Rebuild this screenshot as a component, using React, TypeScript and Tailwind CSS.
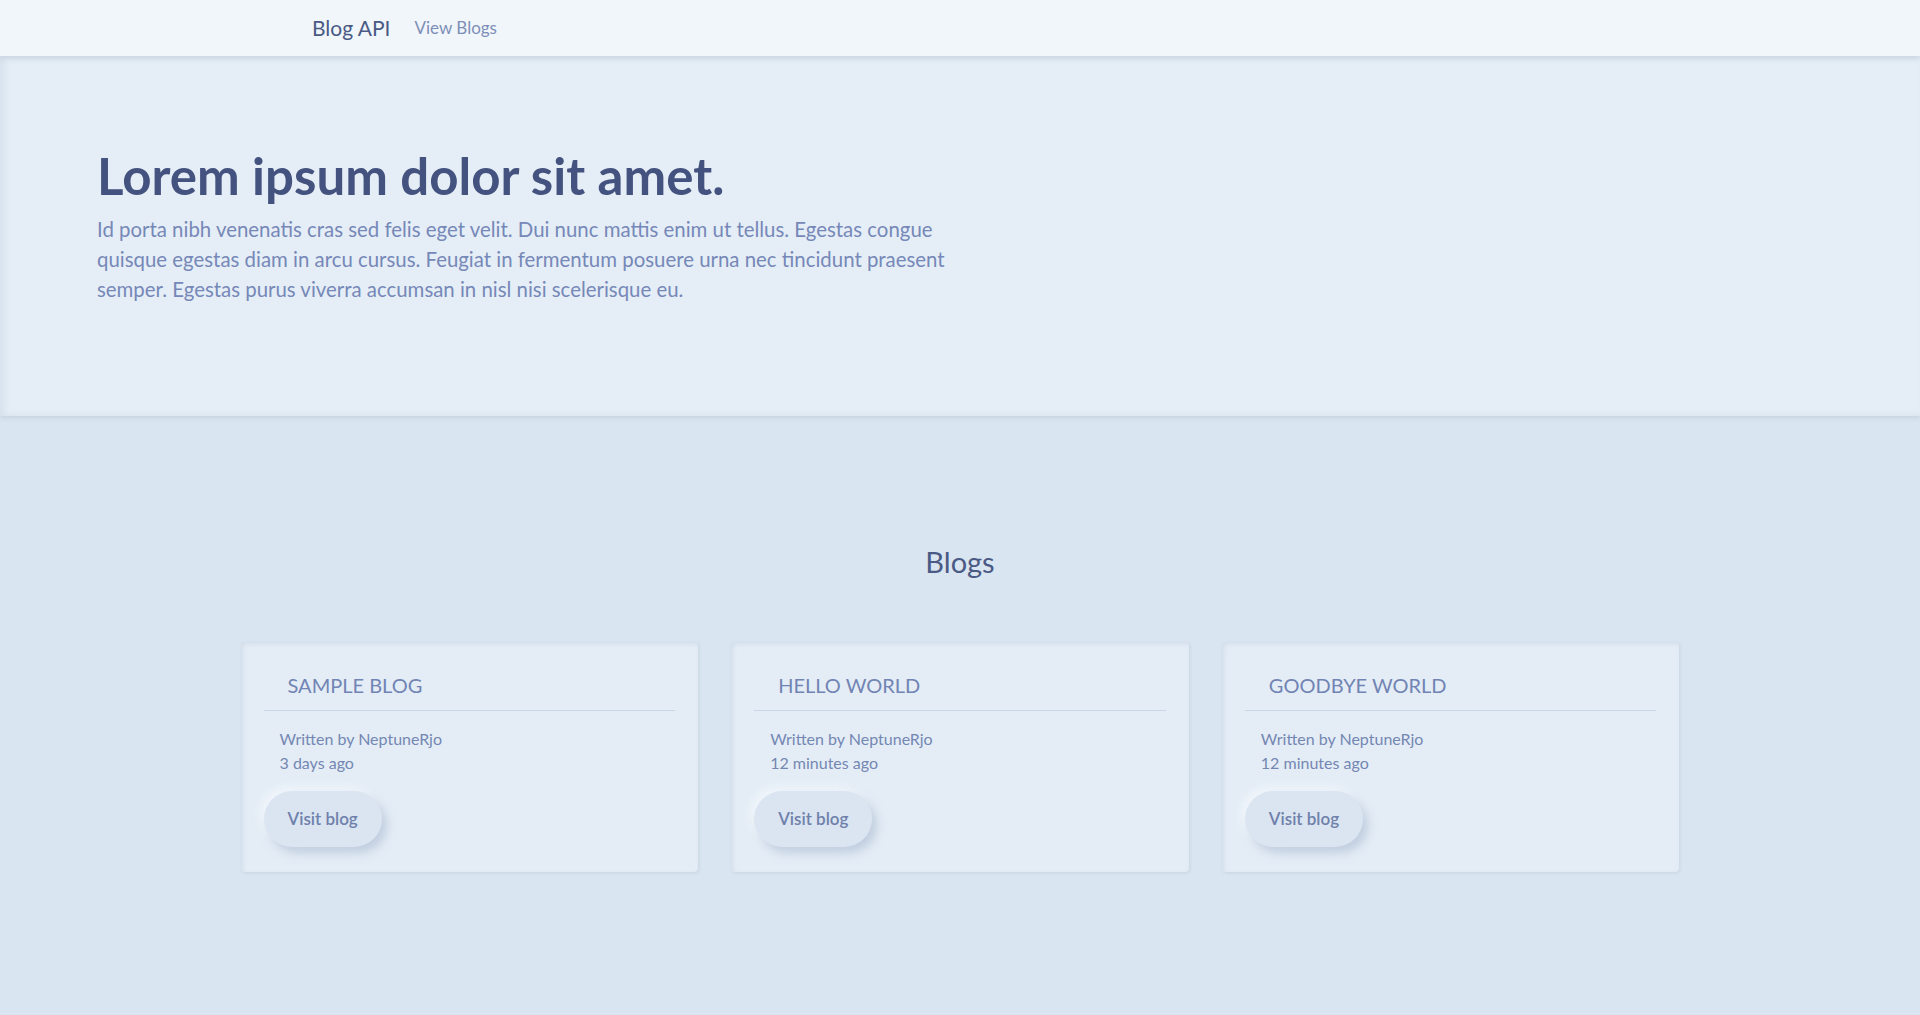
import React from "react"

interface Blog {
	title: string
	author: string
	time: string
}

const blogs: Blog[] = [
	{ title: "SAMPLE BLOG", author: "NeptuneRjo", time: "3 days ago" },
	{ title: "HELLO WORLD", author: "NeptuneRjo", time: "12 minutes ago" },
	{ title: "GOODBYE WORLD", author: "NeptuneRjo", time: "12 minutes ago" },
]

function BlogCard({ blog }: { blog: Blog }) {
	return (
		<div className="flex flex-col bg-[#e4edf6] rounded-sm px-[23px] pt-[28px] pb-[25px] shadow-[inset_2px_2px_4px_rgba(180,195,215,0.35),1px_1px_3px_rgba(170,185,205,0.35)]">
			<h3 className="text-[20px] text-[#7184b3] pl-6 pb-[10px] border-b border-[#c8d6e6] leading-[30px]">{blog.title}</h3>
			<div className="flex flex-col pl-4 pt-[16px] text-[16px] text-[#7487b3] leading-6">
				<p>Written by {blog.author}</p>
				<p>{blog.time}</p>
			</div>
			<div className="mt-[16px]">
				<button
					type="button"
					className="bg-[#dae5f1] rounded-full h-[56px] px-6 text-[17px] font-semibold text-[#6f80ab] shadow-[5px_6px_10px_rgba(165,180,205,0.55),-4px_-4px_8px_rgba(245,249,253,0.8)]"
				>
					Visit blog
				</button>
			</div>
		</div>
	)
}

export default function App() {
	return (
		<div className="min-h-[1015px] bg-[#d9e5f0] font-['Lato','Noto_Sans',sans-serif]">
			{/*navbar*/}
			<nav className="relative z-10 h-[56px] bg-[#f1f6fa] flex items-center pl-[312px] gap-6 shadow-[0_2px_6px_rgba(170,185,205,0.45)]">
				<span className="text-[21px] text-[#4a5a85]">Blog API</span>
				<span className="text-[17px] text-[#7d8fb8]">View Blogs</span>
			</nav>
			{/*hero*/}
			<section className="h-[360px] bg-[#e5eef6] px-[97px] pt-[92px] shadow-[inset_4px_0_6px_rgba(190,205,220,0.4),0_2px_4px_rgba(175,190,210,0.45)]">
				<h1 className="text-[51px] font-bold text-[#44527f] leading-[56px]">Lorem ipsum dolor sit amet.</h1>
				<p className="mt-[10px] max-w-[880px] text-[20.4px] leading-[30px] text-[#7688b8]">
					Id porta nibh venenatis cras sed felis eget velit. Dui nunc mattis enim ut tellus. Egestas congue quisque egestas diam in arcu cursus. Feugiat in fermentum posuere urna nec tincidunt praesent semper. Egestas purus viverra accumsan in nisl nisi scelerisque eu.
				</p>
			</section>
			{/*blogs*/}
			<section className="flex flex-col items-center pt-[128px]">
				<h2 className="text-[29px] text-[#4a5a85] leading-9">Blogs</h2>
				<div className="grid grid-cols-3 gap-[33px] w-[1439px] mt-[62px]">
					{blogs.map((blog) => (
						<BlogCard key={blog.title} blog={blog} />
					))}
				</div>
			</section>
		</div>
	)
}
